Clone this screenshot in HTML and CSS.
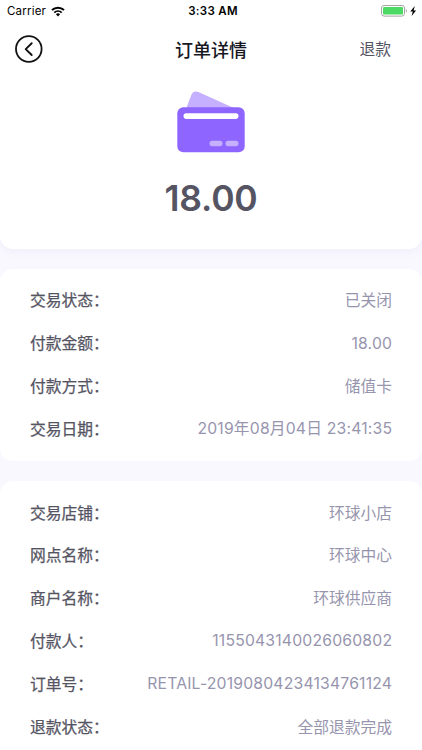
FILE: index.html
```html
<!DOCTYPE html>
<html lang="zh-CN">
<head>
    <meta charset="UTF-8">
    <meta name="viewport" content="width=device-width, initial-scale=1.0">
    <title>订单详情</title>
    <link rel="stylesheet" href="styles.css">
</head>
<body>
    <div class="top">
        <div class="status-bar">
            <div class="carrier">
                <span>Carrier</span>
                <svg class="wifi" viewBox="0 0 14 11" width="14" height="11">
                    <path d="M1 4.1a8.8 8.8 0 0 1 12 0" fill="none" stroke="#000" stroke-width="2"/>
                    <path d="M3.3 6.6a5.4 5.4 0 0 1 7.4 0" fill="none" stroke="#000" stroke-width="1.8"/>
                    <path d="M4.9 8.3a3.1 3.1 0 0 1 4.2 0L7 10.5z"/>
                </svg>
            </div>
            <div class="time">3:33 AM</div>
            <div class="battery">
                <svg viewBox="0 0 38 12" width="38" height="12">
                    <rect x=".5" y=".5" width="23" height="10.6" rx="2.6" fill="#fff" stroke="#a5a5a5"/>
                    <rect x="2" y="2" width="20" height="7.6" rx="1.2" fill="#4cd964"/>
                    <path d="M24.8 4v3.8c1.5-.6 1.5-3.2 0-3.8z" fill="#a5a5a5"/>
                    <path d="M33.8.9L29.3 6.4h2.5l-1.2 4.7 4.5-5.7h-2.5z"/>
                </svg>
            </div>
        </div>
        <div class="nav">
            <a class="back" href="#">
                <svg viewBox="0 0 28 28" width="28" height="28" fill="none" stroke="#111">
                    <circle cx="13.8" cy="14" r="12.8" stroke-width="1.8"/>
                    <path d="M16.7 8.2l-6 5.9 6 5.9" stroke-width="1.9" stroke-linecap="round" stroke-linejoin="round"/>
                </svg>
            </a>
            <h1 class="title">订单详情</h1>
            <a class="refund" href="#">退款</a>
        </div>
        <svg class="card-icon" viewBox="0 0 68 62" width="68" height="62">
            <path d="M9 18L14.3 4Q16.4-1 22 1.2L58 17.5v8H9z" fill="#c5b0ff"/>
            <rect x="0.3" y="16.2" width="67.4" height="45" rx="6" fill="#8e66ff"/>
            <rect x="6.5" y="22.3" width="55" height="5.6" rx="2.8" fill="#fff"/>
            <rect x="32.5" y="49.8" width="13" height="5.4" rx="2.7" fill="#c5b0ff"/>
            <rect x="48.5" y="49.8" width="13" height="5.4" rx="2.7" fill="#c5b0ff"/>
        </svg>
        <div class="amount">18.00</div>
    </div>

    <div class="panel">
        <div class="row"><span class="label">交易状态：</span><span class="value">已关闭</span></div>
        <div class="row"><span class="label">付款金额：</span><span class="value number">18.00</span></div>
        <div class="row"><span class="label">付款方式：</span><span class="value">储值卡</span></div>
        <div class="row"><span class="label">交易日期：</span><span class="value number">2019年08月04日 23:41:35</span></div>
    </div>

    <div class="panel">
        <div class="row"><span class="label">交易店铺：</span><span class="value">环球小店</span></div>
        <div class="row"><span class="label">网点名称：</span><span class="value">环球中心</span></div>
        <div class="row"><span class="label">商户名称：</span><span class="value">环球供应商</span></div>
        <div class="row"><span class="label">付款人：</span><span class="value number">1155043140026060802</span></div>
        <div class="row"><span class="label">订单号：</span><span class="value number">RETAIL-20190804234134761124</span></div>
        <div class="row"><span class="label">退款状态：</span><span class="value">全部退款完成</span></div>
    </div>
</body>
</html>
```
FILE: styles.css
```css
* {
    box-sizing: border-box;
}

body, html {
    margin: 0;
    padding: 0;
    height: 100%;
    overflow: hidden;
}

body {
    background: #f9f8ff;
    font-family: Inter, "Noto Sans CJK SC", sans-serif;
    color: #555463;
}

a {
    color: inherit;
    text-decoration: none;
}

.top {
    display: flex;
    flex-direction: column;
    align-items: center;
    height: 249px;
    background: #fff;
    border-radius: 0 0 13px 13px;
    box-shadow: 0 2px 10px rgba(120, 110, 190, 0.08);
}

.status-bar {
    display: grid;
    grid-template-columns: 1fr auto 1fr;
    align-items: center;
    width: 100%;
    height: 22px;
    padding: 0 3px 0 7px;
    font-size: 11.5px;
    color: #000;
}

.carrier {
    display: flex;
    align-items: center;
    gap: 5px;
    letter-spacing: 0.2px;
}

.time {
    font-weight: 600;
    letter-spacing: 0.3px;
}

.battery {
    display: flex;
    justify-content: flex-end;
}

.nav {
    display: grid;
    grid-template-columns: 1fr auto 1fr;
    align-items: center;
    width: 100%;
    height: 54px;
    padding: 0 31px 0 15px;
}

.back {
    display: flex;
}

.title {
    margin: 0 0 0 16px;
    font-size: 18px;
    font-weight: 500;
    color: #17171f;
}

.refund {
    margin-top: -2px;
    text-align: right;
    font-size: 15.75px;
}

.card-icon {
    margin-top: 15px;
}

.amount {
    margin-top: 24px;
    font-size: 35.5px;
    line-height: 44px;
    font-weight: 600;
    letter-spacing: -0.2px;
}

.panel {
    margin-top: 20px;
    padding: 11px 30px 10px;
    background: #fff;
    border-radius: 13px;
}

.row {
    display: flex;
    justify-content: space-between;
    align-items: center;
    height: 42.8px;
    font-size: 15.75px;
    line-height: 24px;
    white-space: nowrap;
}

.label {
    padding-bottom: 2px;
    font-family: "Noto Sans CJK SC", sans-serif;
    -webkit-text-stroke: 0.25px #555463;
}

.value {
    color: #9795ae;
}

.number {
    margin-right: -0.2px;
    padding-bottom: 1px;
    letter-spacing: 0.18px;
}
```
